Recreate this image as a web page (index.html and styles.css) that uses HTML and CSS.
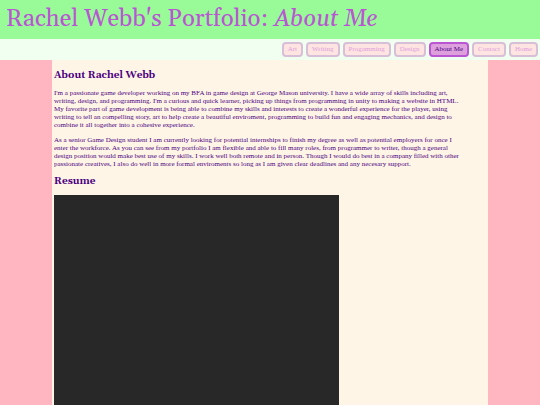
FILE: index.html
```html
<!DOCTYPE html>
<html lang="en">
<head>
    <meta charset="UTF-8">
    <meta name="viewport" content="width=device-width, initial-scale=1.0">
    <title>Rachel Webb's Portfolio: About Me</title>
    <link rel="stylesheet" href="styles.css">
</head>
<body>
    <header>
        <h1>Rachel Webb's Portfolio: <em>About Me</em></h1>
    </header>

    <nav>
        <a href="#art">Art</a>
        <a href="#writing">Writing</a>
        <a href="#programming">Progamming</a>
        <a href="#design">Design</a>
        <a href="#about" class="active">About Me</a>
        <a href="#contact">Contact</a>
        <a href="#home">Home</a>
    </nav>

    <main>
        <h2>About Rachel Webb</h2>
        <p>
            I'm a passionate game developer working on my BFA in game design at George Mason university. I have a wide array of skills including art,<br>
            writing, design, and programming. I'm a curious and quick learner, picking up things from programming in unity to making a website in HTML.<br>
            My favorite part of game development is being able to combine my skills and interests to create a wonderful experience for the player, using<br>
            writing to tell an compelling story, art to help create a beautiful enviroment, programming to build fun and engaging mechanics, and design to<br>
            combine it all together into a cohesive experience.
        </p>
        <p>
            As a senior Game Design student I am currently looking for potential internships to finish my degree as well as potential employers for once I<br>
            enter the workforce. As you can see from my portfolio I am flexible and able to fill many roles, from programmer to writer, though a general<br>
            design position would make best use of my skills. I work well both remote and in person. Though I would do best in a company filled with other<br>
            passionate creatives, I also do well in more formal enviroments so long as I am given clear deadlines and any necesary support.
        </p>

        <h2>Resume</h2>
        <div class="resume"></div>
    </main>
</body>
</html>
```
FILE: styles.css
```css
body {
    margin: 0;
    height: 100vh;
    display: flex;
    flex-direction: column;
    overflow: hidden;
    background-color: lightpink;
    color: indigo;
    font-family: "Liberation Serif", serif;
}
header {
    padding: 4px 6px 5px;
    background-color: palegreen;
}
h1, h2 {
    font-family: Georgia, Gelasio, serif;
}
h1 {
    margin: 0;
    color: mediumorchid;
    font-size: 24px;
    font-weight: normal;
    line-height: 30px;
}
nav {
    display: flex;
    justify-content: flex-end;
    gap: 3px;
    padding: 3px 2px;
    background-color: honeydew;
}
nav a {
    padding: 0 4px;
    border: 2px solid thistle;
    border-radius: 4px;
    background-color: mistyrose;
    color: plum;
    font-size: 7px;
    line-height: 11px;
    text-decoration: none;
}
nav a.active {
    border-color: mediumorchid;
    background-color: plum;
    color: indigo;
}
main {
    flex: 1;
    min-height: 0;
    width: 80%;
    margin: 0 auto;
    padding: 9px 2px 0;
    background-color: #fff5e6;
    overflow: hidden;
}
h2 {
    margin: 0 0 8px;
    font-size: 10px;
    line-height: 12px;
}
p {
    margin: 0 0 7px;
    font-size: 7px;
    line-height: 8px;
}
.resume {
    width: 66%;
    height: 100%;
    background-color: #282828;
}
```
